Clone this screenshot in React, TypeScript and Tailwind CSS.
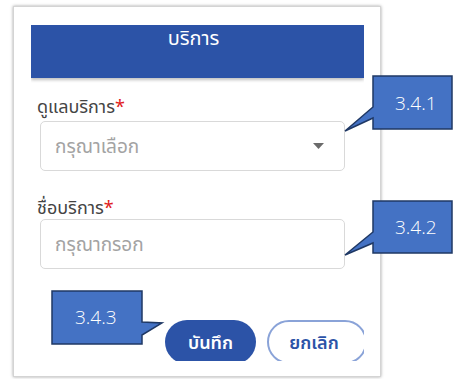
const thai = "font-['Noto_Sans','Noto_Sans_Thai','Tahoma',sans-serif]";

function Callout({ points, label, tx, ty }: { points: string; label: string; tx: number; ty: number }) {
  return (
    <>
      <svg className="absolute inset-0 pointer-events-none" width={454} height={379}>
        <polygon points={points} fill="#4472c4" stroke="#1f3864" strokeWidth={1.5} strokeLinejoin="miter" />
      </svg>
      <span
        className="absolute text-[19px] leading-none text-white font-light font-['Open_Sans',sans-serif]"
        style={{ left: tx, top: ty }}
      >
        {label}
      </span>
    </>
  );
}

export default function App() {
  return (
    <div className={`relative w-[454px] h-[379px] overflow-hidden bg-white ${thai}`}>
      <div className="ml-[13px] mt-[6px] w-[368px] h-[371px] bg-white border border-[#d4d4d4] shadow-[0_0_3px_rgba(0,0,0,0.35)] pl-[17px] pt-[18px]">
        <div className="w-[333px] h-[336px] overflow-hidden">
          <div className="h-[53px] bg-[#2c53a7] shadow-[0_2px_3px_rgba(0,0,0,0.25)] text-center text-white text-[20px] leading-[24px] pt-[1px] pr-[8px]">
            บริการ
          </div>

          <div className="pl-[9px] pr-[19px]">
            <div className="mt-[17px] ml-[-3px] text-[18px] leading-[22px] text-[#444]">
              ดูแลบริการ<span className="text-[#e02020]">*</span>
            </div>
            <div className="mt-[4px] h-[50px] rounded-[5px] border border-[#d9d9d9] flex items-center">
              <span className="ml-[14px] flex-1 text-[19px] text-[#a3a3a3]">กรุณาเลือก</span>
              <svg className="mr-[20px]" width="11" height="6" viewBox="0 0 11 6">
                <polygon points="0,0 11,0 5.5,6" fill="#6b6b6b" />
              </svg>
            </div>

            <div className="mt-[25px] ml-[-3px] text-[18px] leading-[22px] text-[#444]">
              ชื่อบริการ<span className="text-[#e02020]">*</span>
            </div>
            <div className="mt-[1px] h-[50px] rounded-[5px] border border-[#d9d9d9] flex items-center">
              <span className="ml-[14px] text-[19px] text-[#a3a3a3]">กรุณากรอก</span>
            </div>

            <div className="mt-[51px] ml-[125px] flex gap-[11px]">
              <button className="w-[91px] h-[44px] shrink-0 rounded-full bg-[#2c53a7] text-white text-[18px] font-semibold">
                บันทึก
              </button>
              <button className="w-[100px] h-[44px] shrink-0 rounded-full border-2 border-[#8aa3d8] text-[#2c53a7] text-[18px] font-semibold pr-[6px]">
                ยกเลิก
              </button>
            </div>
          </div>
        </div>
      </div>

      <Callout
        points="373,76 452,76 452,129 373,129 373,118 345,131 373,107"
        label="3.4.1"
        tx={395}
        ty={94}
      />
      <Callout
        points="373,201 452,201 452,253 373,253 373,243 345,255 373,232"
        label="3.4.2"
        tx={395}
        ty={218}
      />
      <Callout
        points="52,291 142,291 142,322 162,323 142,335 142,344 52,344"
        label="3.4.3"
        tx={75}
        ty={308}
      />
    </div>
  );
}
